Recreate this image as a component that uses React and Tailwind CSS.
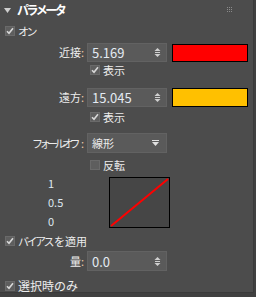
import React from 'react';

const font = { fontFamily: '"Noto Sans CJK JP", "Noto Sans", sans-serif' };

const Check = ({ checked }) => (
  <div className="w-[10px] h-[10px] shrink-0 bg-[#5e5e5e] border border-[#6a6a6a] flex items-center justify-center">
    {checked && (
      <svg width="8" height="8" viewBox="0 0 8 8">
        <path d="M1 4.2 L3 6.3 L7 1.2" stroke="#d8d8d8" strokeWidth="1.6" fill="none" />
      </svg>
    )}
  </div>
);

const Spinner = () => (
  <svg width="7" height="9" viewBox="0 0 7 9">
    <path d="M3.5 0 L6.5 3 L0.5 3 Z" fill="#d0d0d0" />
    <rect x="1" y="4" width="5" height="1" fill="#d0d0d0" />
    <path d="M0.5 6 L6.5 6 L3.5 9 Z" fill="#d0d0d0" />
  </svg>
);

const Field = ({ value, h }) => (
  <div className={`w-[80px] ${h} bg-[#5a5a5a] border border-[#626262] flex items-center justify-between pl-[4px] pr-[5px]`}>
    <span className="text-[13px] text-[#e4eaf2] leading-none">{value}</span>
    <Spinner />
  </div>
);

const CheckRow = ({ children, checked, className }) => (
  <div className={`flex items-center h-[12px] gap-[3px] ${className}`}>
    <Check checked={checked} />
    <span className="text-[11px] text-[#ececec] leading-none whitespace-nowrap">{children}</span>
  </div>
);

const Label = ({ children }) => (
  <div className="w-[86px] text-right text-[11px] text-[#ececec] leading-none pr-[2px] whitespace-nowrap">
    {children}
    <span className="text-[#e8c9a8]">:</span>
  </div>
);

export default function App() {
  return (
    <div style={font} className="w-[256px] h-[297px] bg-[#404040] overflow-hidden">
      <div className="w-[254px] h-[293px] bg-[#4c4c4c] border-r border-b border-[#3a3a3a] relative">
        <div className="absolute right-[21px] top-[7px] grid grid-cols-3 gap-[1px]">
          {[0, 1, 2, 3, 4, 5, 6, 7, 8].map(i => (
            <div key={i} className="w-[1px] h-[1px] bg-[#8a8a8a]" />
          ))}
        </div>
        <div className="h-[20px] flex items-center pl-[4px] gap-[6px]">
          <svg width="7" height="5" viewBox="0 0 7 5"><path d="M0 0 L7 0 L3.5 5 Z" fill="#cfcfcf" /></svg>
          <span className="text-[12px] font-bold text-white leading-none tracking-[-2.5px]">パラメータ</span>
        </div>

        <CheckRow checked className="mt-[5px] pl-[5px]">
          <span className="tracking-[-2.5px]">オン</span>
        </CheckRow>

        <div className="flex items-center mt-[6px]">
          <Label>近接</Label>
          <div className="ml-[1px]"><Field value="5.169" h="h-[19px]" /></div>
          <div className="ml-[5px] w-[76px] h-[18px] bg-[#ff0000] border border-black" />
        </div>
        <CheckRow checked className="mt-[2px] pl-[90px]">表示</CheckRow>

        <div className="flex items-center mt-[12px]">
          <Label>遠方</Label>
          <div className="ml-[1px]"><Field value="15.045" h="h-[19px]" /></div>
          <div className="ml-[5px] w-[76px] h-[19px] bg-[#ffc000] border border-black" />
        </div>
        <CheckRow checked className="mt-[4px] pl-[90px]">表示</CheckRow>

        <div className="flex items-center mt-[10px]">
          <Label><span className="tracking-[-3.5px] pr-[4px]">フォールオフ</span></Label>
          <div className="ml-[1px] w-[80px] h-[20px] bg-[#5a5a5a] border border-[#626262] flex items-center justify-between pl-[4px] pr-[7px]">
            <span className="text-[11px] text-[#ececec] leading-none">線形</span>
            <svg width="7" height="6" viewBox="0 0 7 6">
              <rect x="0" y="0" width="7" height="1" fill="#e0e0e0" />
              <path d="M0 2 L7 2 L3.5 6 Z" fill="#e0e0e0" />
            </svg>
          </div>
        </div>
        <CheckRow className="mt-[6px] pl-[90px]">反転</CheckRow>

        <div className="flex mt-[6px] pl-[48px] h-[51px]">
          <div className="flex flex-col justify-between h-[51px] text-[11px] text-[#dfe8f0] leading-none w-[61px] pt-[1px] pb-[1px]">
            <span>1</span>
            <span>0.5</span>
            <span>0</span>
          </div>
          <div className="w-[61px] h-[51px] bg-[#464646] border border-black">
            <svg width="59" height="49" viewBox="0 0 59 49" className="block">
              <line x1="1" y1="48" x2="58" y2="1" stroke="#ff0000" strokeWidth="2" />
            </svg>
          </div>
        </div>

        <CheckRow checked className="mt-[7px] pl-[5px]">
          <span className="tracking-[-2.5px] pr-[2px]">バイアス</span>を適用
        </CheckRow>

        <div className="flex items-center mt-[4px]">
          <Label>量</Label>
          <div className="ml-[1px]"><Field value="0.0" h="h-[20px]" /></div>
        </div>

        <CheckRow checked className="mt-[9px] pl-[5px]">
          <span className="text-[12px]">選択時のみ</span>
        </CheckRow>
      </div>
    </div>
  );
}
